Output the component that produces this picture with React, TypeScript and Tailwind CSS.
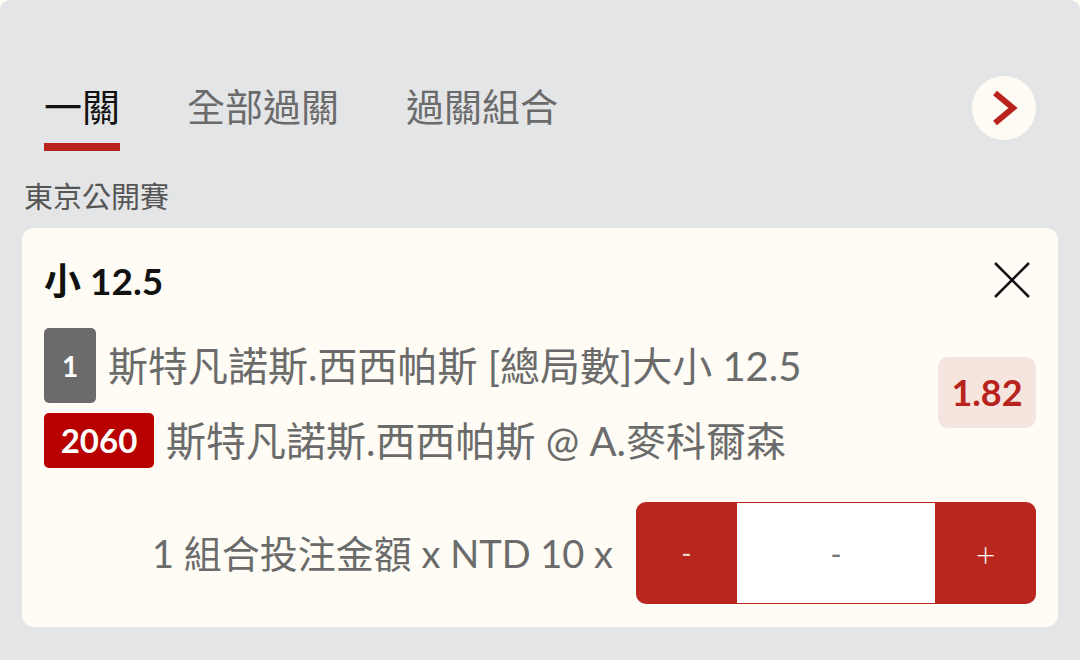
import React, { useState } from "react";

const tabs = ["一關", "全部過關", "過關組合"];

const App = () => {
  const [active, setActive] = useState(0);

  return (
    <div className="min-h-screen bg-[#fefcf4] font-['Lato','Noto_Sans_CJK_TC',sans-serif]">
      <div className="h-[660px] rounded-t-[10px] bg-[#e4e5e7] px-[22px]">
        {/* Tabs */}
        <div className="flex items-start justify-between pt-[76px]">
          <div className="flex gap-[67px] pl-[22px]">
            {tabs.map((t, i) => (
              <button key={t} onClick={() => setActive(i)} className="flex flex-col">
                <div
                  className={
                    "flex h-[60px] items-center text-[38px] leading-none " +
                    (i === active ? "text-[#111]" : "text-[#6b6b6b]")
                  }
                >
                  {t}
                </div>
                <div
                  className={
                    "mt-[7px] h-[8px] w-full " + (i === active ? "bg-[#b8231d]" : "bg-transparent")
                  }
                />
              </button>
            ))}
          </div>
          <button className="mr-[22px] flex h-[64px] w-[64px] items-center justify-center rounded-full bg-[#fdfbf3]">
            <svg width="30" height="40" viewBox="0 0 30 40">
              <polyline
                points="6,5 24,20 6,35"
                fill="none"
                stroke="#b8231d"
                strokeWidth="6"
                strokeLinejoin="miter"
              />
            </svg>
          </button>
        </div>

        {/* League */}
        <div className="mt-[26px] pl-[2px] text-[29px] leading-[40px] text-[#555]">東京公開賽</div>

        {/* Bet card */}
        <div className="mt-[11px] rounded-[12px] bg-[#fefcf4] px-[22px] pb-[23px] pt-[26px]">
          <div className="flex h-[52px] items-center justify-between">
            <div className="text-[37px] font-bold leading-none text-[#111]">小 12.5</div>
            <svg width="40" height="40" viewBox="0 0 40 40" className="mr-[4px]">
              <line x1="3" y1="3" x2="37" y2="37" stroke="#111" strokeWidth="2.5" />
              <line x1="37" y1="3" x2="3" y2="37" stroke="#111" strokeWidth="2.5" />
            </svg>
          </div>

          <div className="mt-[22px] flex items-center justify-between">
            <div className="flex flex-col">
              <div className="flex h-[75px] items-stretch">
                <div className="flex w-[52px] items-center justify-center rounded-[5px] bg-[#6b6b6b] text-[28px] font-bold text-white">
                  1
                </div>
                <div className="ml-[12px] self-center text-[40px] leading-none text-[#6b6b6b]">
                  斯特凡諾斯.西西帕斯 [總局數]大小 12.5
                </div>
              </div>
              <div className="mt-[10px] flex h-[55px] items-stretch">
                <div className="flex w-[110px] items-center justify-center rounded-[5px] bg-[#b80000] text-[33px] font-bold text-white">
                  2060
                </div>
                <div className="ml-[12px] self-center text-[40px] leading-none text-[#6b6b6b]">
                  斯特凡諾斯.西西帕斯 @ A.麥科爾森
                </div>
              </div>
            </div>
            <div className="mb-[12px] flex h-[71px] w-[98px] items-center justify-center rounded-[10px] bg-[#f6e5de] text-[36px] font-bold text-[#b8231d]">
              1.82
            </div>
          </div>

          <div className="mt-[34px] flex items-center justify-end gap-[23px]">
            <div className="text-[38px] leading-none text-[#6b6b6b]">1 組合投注金額 x NTD 10 x</div>
            <div className="flex h-[102px] w-[400px] overflow-hidden rounded-[10px] bg-[#b8261e] py-[1px]">
              <button className="flex w-[101px] items-center justify-center text-[28px] text-[#f4d0cc]">-</button>
              <div className="flex w-[198px] items-center justify-center bg-white text-[30px] text-[#777]">-</div>
              <button className="flex w-[101px] items-center justify-center text-[34px] font-light text-white">+</button>
            </div>
          </div>
        </div>
      </div>
    </div>
  );
};

export default App;
